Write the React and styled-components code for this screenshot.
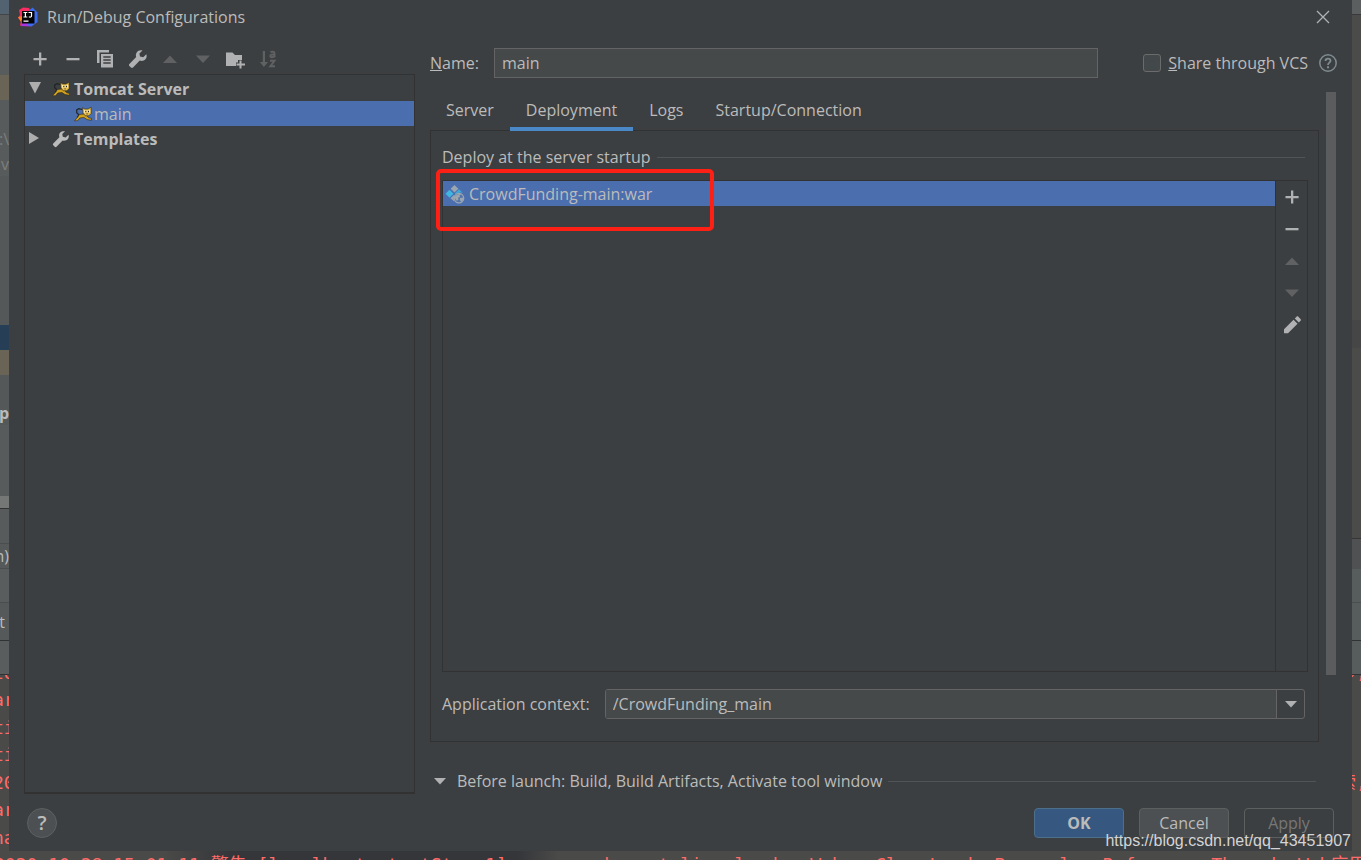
import { useState } from "react";
import styled, { createGlobalStyle } from "styled-components";

const GlobalStyle = createGlobalStyle`
    * {
        box-sizing: border-box;
    }

    body {
        margin: 0;
        background: #4a4a48;
        color: #bbbbbb;
        font-family: "Open Sans", "Noto Sans CJK SC", sans-serif;
        font-size: 16px;
        line-height: 24px;
        overflow: hidden;
    }

    button, input {
        font: inherit;
        color: inherit;
        margin: 0;
    }
`;

const Page = styled.div`
    display: grid;
    grid-template: 100vh / 100%;
    position: relative;
`;

/* editor window behind the dialog */
const Backdrop = styled.div`
    grid-area: 1 / 1;
    display: flex;
    flex-direction: column;
    overflow: hidden;
`;

const Strips = styled.div`
    display: flex;
    justify-content: space-between;
`;

const Strip = styled.div`
    width: 9px;
`;

const Band = styled.div`
    display: flex;
    align-items: center;
    justify-content: flex-end;
    overflow: hidden;
    height: ${(props) => props.$height}px;
    background: ${(props) => props.$color};
    color: ${(props) => props.$text || "#bbbbbb"};
    font-weight: ${(props) => (props.$bold ? 700 : 400)};
    white-space: pre;
    border-bottom: ${(props) => (props.$line ? `1px solid ${props.$line}` : "none")};
`;

const Console = styled.div`
    flex: 1;
    background: linear-gradient(90deg, #4a4a48 0 12%, #35363a 17% 38%, #4a4a48 41%);
    color: #ff6b68;
    font-family: "DejaVu Sans Mono", "Noto Sans CJK SC", monospace;
    font-size: 18px;
    line-height: 27px;
    overflow: hidden;
`;

const ConsoleRow = styled.div`
    display: flex;
    justify-content: space-between;
    height: ${(props) => props.$height}px;
    align-items: flex-end;
    overflow: hidden;
`;

const Clip = styled.span`
    display: flex;
    width: 9px;
    overflow: hidden;
    white-space: pre;
    text-indent: ${(props) => (props.$wide ? -14 : -7)}px;
`;

const LogLine = styled.div`
    white-space: pre;
    margin-left: -6px;
`;

const Dialog = styled.main`
    grid-area: 1 / 1;
    display: flex;
    flex-direction: column;
    margin: 0 9px 9px;
    background: #3c3f41;
    position: relative;
`;

const TitleBar = styled.header`
    display: flex;
    align-items: center;
    gap: 9px;
    height: 34px;
    padding: 0 19px 0 9px;
`;

const Title = styled.h1`
    flex: 1;
    margin: 0;
    font-size: 16px;
    font-weight: 400;
`;

const IconButton = styled.button`
    display: flex;
    align-items: center;
    justify-content: center;
    width: 20px;
    height: 20px;
    padding: 0;
    border: none;
    background: none;
    color: ${(props) => (props.disabled ? "#5f6162" : "#afb1b3")};
`;

const Body = styled.div`
    flex: 1;
    display: flex;
    gap: 15px;
    min-height: 0;
    padding: 14px 14px 0 15px;
`;

const Sidebar = styled.aside`
    display: flex;
    flex-direction: column;
    flex: 0 0 391px;
`;

const Toolbar = styled.div`
    display: flex;
    justify-content: space-between;
    align-items: flex-start;
    width: 248px;
    height: 26px;
    padding-top: 1px;
    margin: 0 6px;
`;

const Tree = styled.ul`
    flex: 1;
    margin: 0;
    padding: 1px 0;
    list-style: none;
    border: 1px solid #323232;
    border-bottom-width: 2px;
`;

const TreeRow = styled.li`
    display: flex;
    align-items: center;
    height: 25px;
    gap: ${(props) => (props.$child ? 2 : 4)}px;
    padding-left: ${(props) => (props.$child ? 49 : 4)}px;
    background: ${(props) => (props.$selected ? "#4b6eaf" : "none")};
    font-weight: ${(props) => (props.$child ? 400 : 700)};
`;

const TreeArrow = styled.span`
    display: flex;
    width: 19px;
`;

const Content = styled.section`
    flex: 1;
    display: flex;
    flex-direction: column;
    min-width: 0;
`;

const NameRow = styled.div`
    display: flex;
    align-items: center;
    height: 30px;
    margin-bottom: 14px;
`;

const NameLabel = styled.label`
    width: 64px;
`;

const TextInput = styled.input`
    flex: 1;
    min-width: 0;
    height: 30px;
    padding: 0 7px;
    border: 1px solid #646464;
    background: #45494a;
    outline: none;
`;

const ShareLabel = styled.label`
    display: flex;
    align-items: center;
    gap: 7px;
    margin: 0 10px 0 45px;
`;

const CheckBox = styled.input`
    appearance: none;
    width: 18px;
    height: 18px;
    border: 1px solid #6b6b6b;
    border-radius: 3px;
    background: #43494a;
`;

const Scroller = styled.div`
    flex: 1;
    display: flex;
    gap: 7px;
    min-height: 0;
`;

const ScrollBody = styled.div`
    flex: 1;
    display: flex;
    flex-direction: column;
    min-width: 0;
`;

const ScrollThumb = styled.div`
    width: 10px;
    height: 83%;
    margin-right: 2px;
    background: #5b5c5d;
`;

const Tabs = styled.div`
    display: flex;
    height: 39px;
    margin-bottom: -1px;
    position: relative;
    z-index: 1;
`;

const Tab = styled.button`
    padding: 0 16px;
    border: none;
    border-bottom: 4px solid ${(props) => (props.$active ? "#4a88c7" : "transparent")};
    background: none;
`;

const Panel = styled.div`
    flex: 1;
    display: flex;
    flex-direction: column;
    padding: 14px 10px 22px 11px;
    border: 1px solid #323232;
`;

const SectionTitle = styled.div`
    display: flex;
    align-items: center;
    gap: 6px;

    &::after {
        content: "";
        flex: 1;
        height: 1px;
        margin-right: 3px;
        background: #515456;
    }
`;

const Artifacts = styled.div`
    flex: 1;
    display: flex;
    margin: 11px 0 17px;
    border: 1px solid #323232;
    position: relative;
`;

const ArtifactList = styled.ul`
    flex: 1;
    margin: 0;
    padding: 0;
    list-style: none;
    border-right: 1px solid #323232;
`;

const Artifact = styled.li`
    display: flex;
    align-items: center;
    gap: 4px;
    height: 25px;
    padding-left: 2px;
    background: #4b6eaf;
`;

const SideTools = styled.div`
    display: flex;
    flex-direction: column;
    align-items: center;
    gap: 12px;
    width: 31px;
    padding-top: 6px;
`;

const Marker = styled.div`
    position: absolute;
    top: -12px;
    left: -7px;
    width: 278px;
    height: 62px;
    border: 4px solid #ff2015;
    border-radius: 5px;
    pointer-events: none;
`;

const ContextRow = styled.div`
    display: flex;
    align-items: center;
    gap: 15px;
    margin-right: 3px;
`;

const Combo = styled.div`
    flex: 1;
    display: flex;
    height: 30px;
    border: 1px solid #646464;
    border-radius: 3px;
    overflow: hidden;

    input {
        height: 28px;
        border: none;
    }

    button {
        width: 28px;
        height: 28px;
        border-left: 1px solid #646464;
    }
`;

const BeforeLaunch = styled.div`
    display: flex;
    align-items: center;
    gap: 7px;
    height: 52px;
    padding-top: 26px;

    ${SectionTitle} {
        flex: 1;
    }
`;

const Footer = styled.footer`
    display: flex;
    align-items: center;
    gap: 15px;
    padding: 14px 18px 13px;
`;

const HelpButton = styled.button`
    width: 30px;
    height: 30px;
    margin-right: auto;
    padding: 0;
    border: 1px solid #5e6060;
    border-radius: 50%;
    background: #4c5052;
    font-size: 20px;
    font-weight: 600;
`;

const Button = styled.button`
    width: 90px;
    height: 30px;
    padding: 0;
    border: 1px solid ${(props) => (props.$primary ? "#4c708c" : "#5e6060")};
    border-radius: 4px;
    background: ${(props) => (props.$primary ? "#365880" : "#4c5052")};
    font-weight: ${(props) => (props.$primary ? 700 : 400)};

    &:disabled {
        background: none;
        color: #777777;
    }
`;

const Watermark = styled.a`
    position: absolute;
    right: 10px;
    bottom: 7px;
    color: #d4d4d4;
    font-family: "Liberation Sans", sans-serif;
    font-size: 16px;
    text-decoration: none;
`;

const Icon = ({ size = 20, children }) => (
    <svg width={size} height={size} viewBox="0 0 20 20" fill="currentColor" aria-hidden="true">
        {children}
    </svg>
);

const AddIcon = () => <Icon><path d="M9 3.500h2.300v5.400h5.300v2.300h-5.300v5.400H9v-5.400H3.500V8.900H9z" /></Icon>;
const RemoveIcon = () => <Icon><path d="M3.500 9h13v2.300h-13z" /></Icon>;
const UpIcon = () => <Icon><path d="M3 14h14l-7-7.500z" /></Icon>;
const DownIcon = () => <Icon><path d="M3 6.500h14L10 14z" /></Icon>;
const WrenchIcon = ({ size }) => (
    <Icon size={size}>
        <path d="M18.300 5.200 15.200 8.300 12 7.600 11.400 4.500 14.500 1.500C12.200.9 9.900 1.600 8.700 3.400 7.700 4.900 7.700 6.500 8.200 8L1.400 15c-.6.600-.6 1.400 0 2l1.600 1.600c.6.600 1.400.600 2 0l6.800-7c2 .7 4.200.200 5.600-1.300 1.300-1.400 1.600-3.400.9-5.100z" />
    </Icon>
);
const CopyIcon = () => (
    <Icon>
        <path d="M2 1h12v2.500H4.500V14H2z" />
        <path fillRule="evenodd" d="M6 5h12v13.500H6zM8.300 7.300v1.500h7.400V7.300zM8.300 10.300v1.500h7.400v-1.500zM8.300 13.300v1.500h7.400v-1.500z" />
    </Icon>
);
const FolderIcon = () => (
    <Icon>
        <path d="M1 3.500h6.500L10 6h7v5h-4v2.500h-2V17H1z" />
        <path d="M14.500 11.500h2v3H20v2h-3.500V19.500h-2v-3H11.500v-2h3z" />
    </Icon>
);
const SortIcon = () => (
    <Icon>
        <path d="M4.800 2H7v11H10l-4.100 5-4.100-5h3z" />
        <g fill="none" stroke="currentColor" strokeWidth="1.900">
            <path d="M12.500 3.200c1.500-.8 4-.7 4 1V8.500M16.500 5.500c-2.300-.2-4.200.100-4.200 1.500 0 1.800 3 1.700 4.200-.2" />
            <path d="M12 11.800h4.500l-4.200 5.500h4.700" />
        </g>
    </Icon>
);
const PencilIcon = () => (
    <Icon>
        <path d="M11.500 4.800 15.500 8.800 6 18.200H2v-4zM12.800 3.500l1.700-1.700c.6-.6 1.300-.6 1.900 0l2.100 2.100c.6.600.6 1.300 0 1.900l-1.700 1.700z" />
    </Icon>
);
const CloseIcon = () => (
    <Icon><path d="M4 4l12 12M16 4 4 16" fill="none" stroke="currentColor" strokeWidth="1.300" /></Icon>
);
const HelpIcon = () => (
    <Icon>
        <g fill="none" stroke="#7f8b91" strokeWidth="1.500">
            <circle cx="10" cy="10" r="8.200" />
            <path d="M7.500 8c0-1.500 1-2.400 2.500-2.400s2.500.9 2.500 2.200c0 1.800-2.500 2-2.500 4.200" strokeWidth="1.800" />
        </g>
        <path d="M9 13.300h2v2H9z" fill="#7f8b91" />
    </Icon>
);
const TomcatIcon = () => (
    <Icon size={18}>
        <path d="M3.500 14 5.500 11 3 8.500V5.500l2.500-1.500L9 5" fill="none" stroke="#1f2324" strokeWidth="1.300" />
        <path d="M6 10.500l5-.5 3 1.500 2 2.500 3.500 1v2l-5-.8-3.500-2.400-4.500.7-2.500 3H.5l4-4.500z" fill="#d2a21c" stroke="#302b1c" strokeWidth=".7" />
        <path d="M9.500 3l2.500 1.500h3.500L19 2.500v7L16.500 12h-4L10 9z" fill="#e9bf4c" stroke="#302b1c" strokeWidth=".7" />
        <path d="M11 5.500h3v3h-3zM15 5.500h3v3h-3z" fill="#ffeaa0" />
        <path d="M12.500 6.500h1.200v1.500h-1.200zM15.500 6.500h1.200v1.500h-1.200zM13.500 9.500h2l-1 1.200z" fill="#2b2b2b" />
    </Icon>
);
const ArtifactIcon = () => (
    <Icon>
        <path d="M9.500 1l3.800 3.800-3.800 3.800-3.800-3.800z" fill="#9aa7b0" />
        <path d="M4.500 5.700l4 4-4 4-4-4z" fill="#40b6e0" />
        <path d="M14 5.300l4 3.700c-3-.9-5.600-.2-7.300 1.500l-1-1z" fill="#40a8d8" />
        <path d="M9.200 10.700l.5.500C8.500 13.500 8.600 15.500 9.500 17.700L5.500 14.300z" fill="#9aa7b0" />
        <circle cx="14" cy="14.200" r="4.700" fill="#5674ab" stroke="#9aa7b0" strokeWidth="1.300" />
        <path d="M10 12.500c1.500-2 3.500-2.900 6-2.500l-1.500 1.500.5 1.500-2 .8.500 2-1.500 1c-1.500-1-2.200-2.600-2-4.300zM15 14l3.500-.5c.2 1.800-.8 3.500-2.300 4.500L14.800 16z" fill="#9aa7b0" />
    </Icon>
);
const LogoIcon = () => (
    <Icon>
        <path d="M1 3 5 .5 11 1l4 9-8 9-5-.5L3 14 0 11l2-3z" fill="#fc2d63" />
        <path d="M0 10l5-1 2 4-4 2z" fill="#f8851f" />
        <path d="M3 13l5 1 5 5.500-10-.5z" fill="#a835df" />
        <path d="M11 3.500 14.500.5l5 5V15l-6 4.500L9 18z" fill="#3d6bf0" />
        <path d="M4 4h12.500v12.500H4z" fill="#050505" />
        <path d="M5.500 5.500h3.800M7.400 5.500V10M5.500 10h3.800M10.500 5.500h3V9c0 1-1.300 1.300-2.700.8M5.500 14.200h5" fill="none" stroke="#fff" strokeWidth="1.200" />
    </Icon>
);
const SmallDown = () => (
    <svg width="12" height="8" viewBox="0 0 12 8" aria-hidden="true"><path d="M0 1h12L6 7.500z" fill="#afb1b3" /></svg>
);
const TreeOpen = () => (
    <svg width="12" height="14" viewBox="0 0 12 14" aria-hidden="true"><path d="M0 0h12L6 11.500z" fill="#adadad" /></svg>
);
const TreeClosed = () => (
    <svg width="12" height="14" viewBox="0 0 12 14" aria-hidden="true"><path d="M0 0v12l10-6z" fill="#adadad" /></svg>
);

const leftBands = [
    { height: 15, color: "#536270", line: "#424647" },
    { height: 60, color: "#595c5c" },
    { height: 25, color: "#6a6456" },
    { height: 26, color: "#585b5b" },
    { height: 25, color: "#585b5b", label: ":\\", text: "#7b7e7e" },
    { height: 25, color: "#585b5b", label: "v", text: "#7b7e7e" },
    { height: 149, color: "#555858" },
    { height: 25, color: "#263f57" },
    { height: 25, color: "#6a6456" },
    { height: 25, color: "#555858" },
    { height: 25, color: "#555858", label: "p", bold: true },
    { height: 71, color: "#585b5b" },
    { height: 13, color: "#757777", line: "#303234" },
    { height: 35, color: "#585b5b", line: "#4b4e4f" },
    { height: 25, color: "#55595a", label: "n)", line: "#4b4e4f" },
    { height: 34, color: "#595d5e", line: "#4b4e4f" },
    { height: 38, color: "#55595a", label: "t ", line: "#303234" },
    { height: 34, color: "#595d5e", line: "#303234" },
];

const rightBands = [
    { height: 15, color: "#5b5f60", line: "#38393a" },
    { height: 305, color: "#4b4b4a" },
    { height: 28, color: "#474646" },
    { height: 191, color: "#4b4b4a", line: "#353535" },
    { height: 30, color: "#505152" },
    { height: 34, color: "#575c5d", line: "#4b4e4f" },
    { height: 38, color: "#575c5d", line: "#303234" },
    { height: 34, color: "#575c5d", line: "#303234" },
];

const logRows = [
    { left: "to", right: "序,", height: 11 },
    { left: "ar", height: 27 },
    { left: "ti", height: 28 },
    { left: "ti", height: 27 },
    { left: "20", right: "索,", height: 28 },
    { left: "ar", height: 27 },
    { left: "na", height: 28 },
];

function Bands({ bands }) {
    return (
        <Strip>
            {bands.map((band, index) => (
                <Band
                    key={index}
                    $height={band.height}
                    $color={band.color}
                    $line={band.line}
                    $text={band.text}
                    $bold={band.bold}
                >
                    {band.label}
                </Band>
            ))}
        </Strip>
    );
}

function EditorBackdrop() {
    return (
        <Backdrop aria-hidden="true">
            <Strips>
                <Bands bands={leftBands} />
                <Bands bands={rightBands} />
            </Strips>
            <Console>
                {logRows.map((row, index) => (
                    <ConsoleRow key={index} $height={row.height}>
                        <Clip>{row.left}</Clip>
                        <Clip $wide>{row.right}</Clip>
                    </ConsoleRow>
                ))}
                <LogLine>
                    2020-10-28 15:01:11 警告 [localhost-startStop-1] org.apache.catalina.loader.WebappClassLoaderBase.clearReferencesThreads Web应用程序
                </LogLine>
            </Console>
        </Backdrop>
    );
}

const tabs = ["Server", "Deployment", "Logs", "Startup/Connection"];

function App() {
    const [tab, setTab] = useState("Deployment");
    const [shared, setShared] = useState(false);

    return (
        <Page>
            <GlobalStyle />
            <EditorBackdrop />
            <Dialog>
                <TitleBar>
                    <LogoIcon />
                    <Title>Run/Debug Configurations</Title>
                    <IconButton aria-label="Close"><CloseIcon /></IconButton>
                </TitleBar>
                <Body>
                    <Sidebar>
                        <Toolbar>
                            <IconButton aria-label="Add"><AddIcon /></IconButton>
                            <IconButton aria-label="Remove"><RemoveIcon /></IconButton>
                            <IconButton aria-label="Copy"><CopyIcon /></IconButton>
                            <IconButton aria-label="Edit templates"><WrenchIcon /></IconButton>
                            <IconButton aria-label="Move up" disabled><UpIcon /></IconButton>
                            <IconButton aria-label="Move down" disabled><DownIcon /></IconButton>
                            <IconButton aria-label="New folder"><FolderIcon /></IconButton>
                            <IconButton aria-label="Sort" disabled><SortIcon /></IconButton>
                        </Toolbar>
                        <Tree>
                            <TreeRow>
                                <TreeArrow><TreeOpen /></TreeArrow>
                                <TomcatIcon />
                                Tomcat Server
                            </TreeRow>
                            <TreeRow $child $selected>
                                <TomcatIcon />
                                main
                            </TreeRow>
                            <TreeRow>
                                <TreeArrow><TreeClosed /></TreeArrow>
                                <WrenchIcon size={18} />
                                Templates
                            </TreeRow>
                        </Tree>
                    </Sidebar>
                    <Content>
                        <NameRow>
                            <NameLabel htmlFor="name"><u>N</u>ame:</NameLabel>
                            <TextInput id="name" defaultValue="main" />
                            <ShareLabel>
                                <CheckBox
                                    type="checkbox"
                                    checked={shared}
                                    onChange={() => setShared(!shared)}
                                />
                                <span><u>S</u>hare through VCS</span>
                            </ShareLabel>
                            <IconButton aria-label="About sharing"><HelpIcon /></IconButton>
                        </NameRow>
                        <Scroller>
                            <ScrollBody>
                                <Tabs role="tablist">
                                    {tabs.map((name) => (
                                        <Tab
                                            key={name}
                                            role="tab"
                                            aria-selected={tab === name}
                                            $active={tab === name}
                                            onClick={() => setTab(name)}
                                        >
                                            {name}
                                        </Tab>
                                    ))}
                                </Tabs>
                                <Panel>
                                    <SectionTitle>Deploy at the server startup</SectionTitle>
                                    <Artifacts>
                                        <ArtifactList>
                                            <Artifact>
                                                <ArtifactIcon />
                                                CrowdFunding-main:war
                                            </Artifact>
                                        </ArtifactList>
                                        <SideTools>
                                            <IconButton aria-label="Add artifact"><AddIcon /></IconButton>
                                            <IconButton aria-label="Remove artifact"><RemoveIcon /></IconButton>
                                            <IconButton aria-label="Artifact up" disabled><UpIcon /></IconButton>
                                            <IconButton aria-label="Artifact down" disabled><DownIcon /></IconButton>
                                            <IconButton aria-label="Edit artifact"><PencilIcon /></IconButton>
                                        </SideTools>
                                        <Marker />
                                    </Artifacts>
                                    <ContextRow>
                                        <label htmlFor="context">Application context:</label>
                                        <Combo>
                                            <TextInput id="context" defaultValue="/CrowdFunding_main" />
                                            <IconButton aria-label="Show contexts"><SmallDown /></IconButton>
                                        </Combo>
                                    </ContextRow>
                                </Panel>
                                <BeforeLaunch>
                                    <IconButton aria-label="Toggle before launch"><SmallDown /></IconButton>
                                    <SectionTitle>
                                        Before launch: Build, Build Artifacts, Activate tool window
                                    </SectionTitle>
                                </BeforeLaunch>
                            </ScrollBody>
                            <ScrollThumb />
                        </Scroller>
                    </Content>
                </Body>
                <Footer>
                    <HelpButton aria-label="Help">?</HelpButton>
                    <Button $primary>OK</Button>
                    <Button>Cancel</Button>
                    <Button disabled>Apply</Button>
                </Footer>
            </Dialog>
            <Watermark href="https://blog.csdn.net/qq_43451907">https://blog.csdn.net/qq_43451907</Watermark>
        </Page>
    );
}

export default App;
